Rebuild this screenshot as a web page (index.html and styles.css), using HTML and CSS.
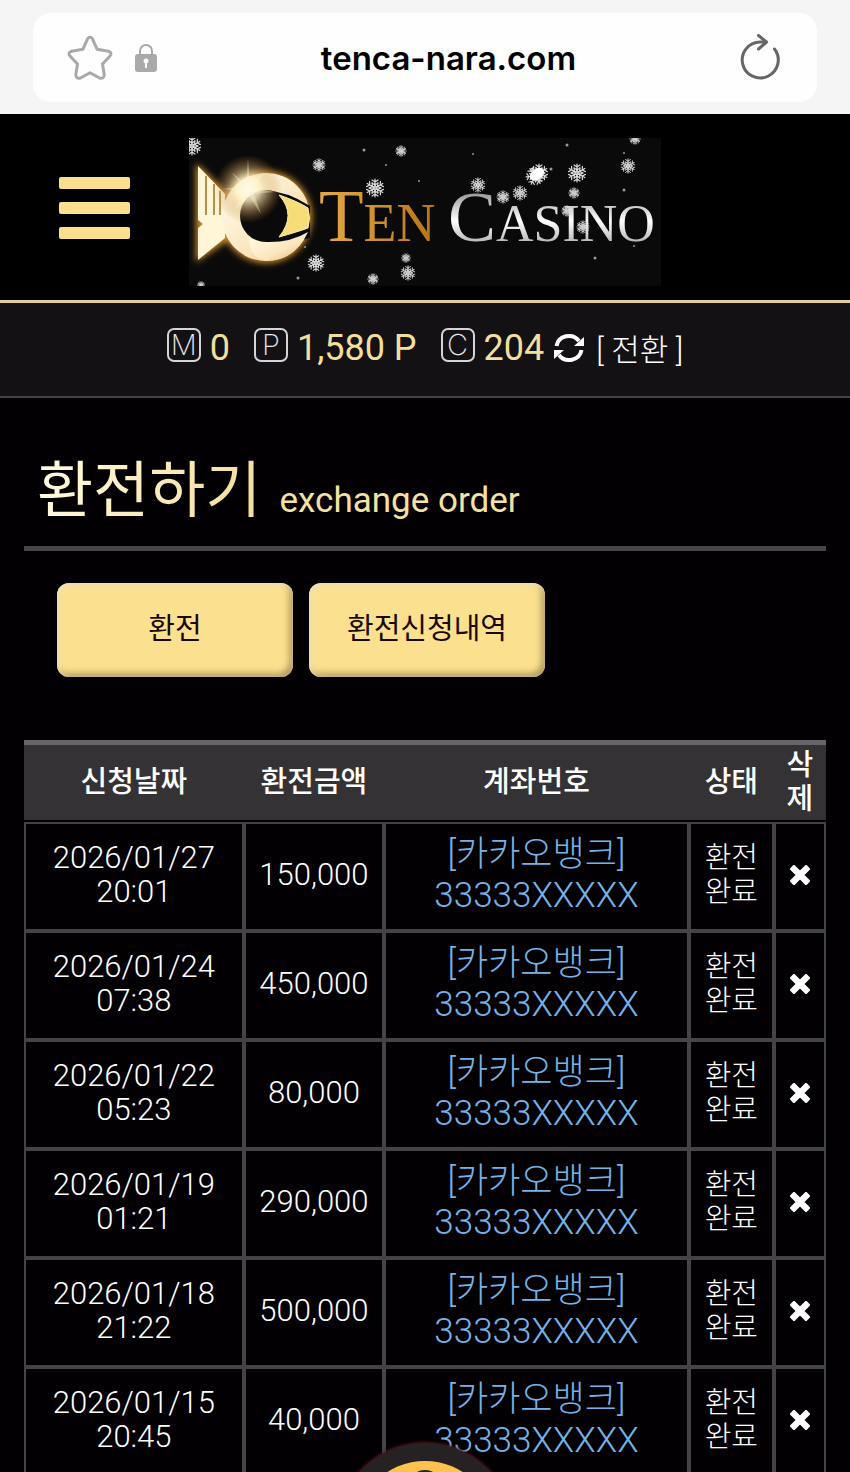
FILE: index.html
```html
<!DOCTYPE html>
<html lang="ko">
<head>
	<meta charset="utf-8">
	<meta name="viewport" content="width=device-width, initial-scale=1">
	<title>환전하기</title>
	<link rel="stylesheet" href="styles.css">
</head>
<body>

	<div class="browser">
		<div class="address">
			<button type="button" class="icon" aria-label="Bookmark">
				<svg width="46" height="46" viewBox="0 0 46 46"><path d="M20.500 3.800Q23 .5 25.500 3.800L30 14.200L41.500 16.200Q45.500 17.500 43 21L35.500 29L37.200 39.500Q37 44.500 32.500 43L23 37.800L13.500 43Q9 44.500 8.800 39.500L10.500 29L3 21Q.5 17.500 4.500 16.200L16 14.200Z" fill="none" stroke="#a9a9a9" stroke-width="3" stroke-linejoin="round"/></svg>
			</button>
			<svg class="lock" width="22" height="30" viewBox="0 0 22 30"><path d="M5 13V8a6 6 0 0 1 12 0v5" fill="none" stroke="#a9a9a9" stroke-width="2"/><rect y="11" width="22" height="18" rx="3" fill="#a9a9a9"/><circle cx="11" cy="18" r="2.500" fill="#fff"/><path d="M10 18h2v7h-2z" fill="#fff"/></svg>
			<input class="url" type="text" value="tenca-nara.com" aria-label="Address">
			<button type="button" class="icon" aria-label="Reload">
				<svg width="40" height="48" viewBox="0 0 40 48" fill="none" stroke="#666" stroke-width="3" stroke-linecap="round" stroke-linejoin="round"><path d="M34.500 15A18 18 0 1 1 20 8h6"/><path d="M18.500 1.500l8 6.500-8 7"/></svg>
			</button>
		</div>
	</div>

	<header class="header">
		<button type="button" class="menu" aria-label="Menu"><i></i><i></i><i></i></button>
		<a href="#" class="logo">
			<svg width="472" height="148" viewBox="0 0 472 148" role="img" aria-label="Ten Casino">
				<defs>
					<linearGradient id="gold" x1="0" y1="0" x2="1" y2="0"><stop offset="0" stop-color="#e5aa48"/><stop offset="1" stop-color="#b87512"/></linearGradient>
					<linearGradient id="silver" x1="0" y1="0" x2="0" y2="1"><stop offset="0.200" stop-color="#999"/><stop offset="0.550" stop-color="#fff"/><stop offset="0.800" stop-color="#bbb"/></linearGradient>
					<linearGradient id="ring" x1="0" y1="0" x2="1" y2="1"><stop offset="0" stop-color="#fffdf0"/><stop offset="0.600" stop-color="#fbe6bd"/><stop offset="1" stop-color="#dfa963"/></linearGradient>
					<radialGradient id="flare"><stop offset="0" stop-color="#fff"/><stop offset="0.350" stop-color="#fff0c4" stop-opacity="0.800"/><stop offset="1" stop-color="#b47420" stop-opacity="0"/></radialGradient>
					<filter id="glow" x="-20%" y="-20%" width="140%" height="140%"><feGaussianBlur stdDeviation="3"/></filter>
					<g id="flake" stroke="#ddd" stroke-width="1.200" stroke-linecap="round">
						<g id="arm"><path d="M0 0V-9M0-6l-3-2M0-6l3-2M0-3l-3-2M0-3l3-2M-2-1l-2-1" fill="none"/></g>
						<use href="#arm" transform="rotate(60)"/><use href="#arm" transform="rotate(120)"/><use href="#arm" transform="rotate(180)"/><use href="#arm" transform="rotate(240)"/><use href="#arm" transform="rotate(300)"/>
						<circle r="2" fill="#bbb"/>
					</g>
				</defs>
				<rect width="472" height="148" fill="#0b0a0b"/>
				<!-- fish -->
				<g filter="url(#glow)" fill="#c98a2c">
					<path d="M7 25L38 54V103L7 124Z"/>
					<circle cx="77" cy="79" r="46"/>
				</g>
				<path d="M9 28L36 56V100L9 122V90L14 86L9 82Z" fill="#fff6d8"/>
				<path d="M17 38V77M25 46V77M31 53V77" stroke="#a16d25" stroke-width="1.500"/>
				<circle cx="77" cy="79" r="44" fill="url(#ring)"/>
				<circle cx="77" cy="78" r="26" fill="#0b0a0b"/>
				<path d="M74 52Q98 53 121 68V100Q101 106 78 104Z" fill="#0b0a0b"/>
				<path d="M90 57Q108 63 119 70Q122 80 119 90Q108 94 90 99Q108 77 90 57Z" fill="#f6dd77" stroke="#fff0a8"/>
				<path d="M76 104Q101 105 119 94Q106 123 77 123Q60 120 60 99Q68 105 76 104Z" fill="url(#ring)"/>
				<circle cx="59" cy="51" r="34" fill="url(#flare)"/>
				<path d="M59 20l2 26 14-12-10 16 20 4-20 2 7 20-12-18-14 14 8-19-20-2 20-3-12-14 15 12z" fill="#fff4d0" opacity="0.400"/>
				<!-- name -->
				<g font-family="'Liberation Serif', serif">
					<text x="130" y="103" font-size="73" fill="url(#gold)">T<tspan font-size="54">EN</tspan></text>
					<text x="259" y="103" font-size="72" fill="url(#silver)">C<tspan font-size="52">ASINO</tspan></text>
				</g>
				<!-- snow -->
				<use href="#flake" x="3" y="8"/>
				<use href="#flake" transform="translate(130 27) scale(.7)"/>
				<use href="#flake" transform="translate(212 13) scale(.6)"/>
				<use href="#flake" x="186" y="50"/>
				<use href="#flake" transform="translate(127 125) scale(.9)"/>
				<use href="#flake" transform="translate(217 120) scale(.5)"/>
				<use href="#flake" transform="translate(219 135) scale(.8)"/>
				<use href="#flake" transform="translate(184 141) scale(.6)"/>
				<use href="#flake" transform="translate(12 147) scale(.4)"/>
				<use href="#flake" transform="translate(289 47) scale(.8)"/>
				<use href="#flake" transform="translate(314 59) scale(.7)"/>
				<use href="#flake" transform="translate(331 55) scale(.8)"/>
				<use href="#flake" x="350" y="35"/>
				<use href="#flake" transform="translate(346 38) rotate(25)"/>
				<ellipse cx="348" cy="36" rx="8" ry="5" fill="#fff" transform="rotate(-35 348 36)"/>
				<use href="#flake" x="388" y="35"/>
				<use href="#flake" transform="translate(385 55) scale(.6)"/>
				<use href="#flake" transform="translate(439 28) scale(.8)"/>
				<use href="#flake" transform="translate(378 73) scale(.6)"/>
				<use href="#flake" transform="translate(394 89) scale(.7)"/>
				<use href="#flake" transform="translate(446 1) scale(.6)"/>
				<g fill="#999"><circle cx="175" cy="12" r="1.500"/><circle cx="197" cy="27" r="1"/><circle cx="230" cy="43" r="1"/><circle cx="284" cy="16" r="1"/><circle cx="378" cy="7" r="1.500"/><circle cx="362" cy="31" r="1.500"/><circle cx="435" cy="15" r="1"/><circle cx="435" cy="52" r="1.500"/><circle cx="406" cy="120" r="1.500"/><circle cx="445" cy="108" r="1"/><circle cx="109" cy="140" r="1.500"/><circle cx="116" cy="109" r="1"/></g>
			</svg>
		</a>
	</header>

	<div class="status">
		<span class="stat"><b>M</b>0</span>
		<span class="stat"><b>P</b>1,580 P</span>
		<span class="stat"><b>C</b>204</span>
		<a href="#" class="convert">
			<svg width="30" height="30" viewBox="0 0 30 30"><path d="M2.500 13A12.500 12 0 0 1 25 8M27.500 17A12.500 12 0 0 1 5 22" fill="none" stroke="#fff" stroke-width="4"/><path d="M30 4V13H20ZM0 26V17H10Z" fill="#fff"/></svg>
			[ 전환 ]
		</a>
	</div>

	<main class="content">
		<h1 class="title"><span>환전하기</span> <small>exchange order</small></h1>

		<div class="tabs">
			<button type="button">환전</button>
			<button type="button">환전신청내역</button>
		</div>

		<table class="orders">
			<thead>
				<tr>
					<th class="date">신청날짜</th>
					<th class="amount">환전금액</th>
					<th class="account">계좌번호</th>
					<th class="state">상태</th>
					<th class="del">삭제</th>
				</tr>
			</thead>
			<tbody id="orders"></tbody>
		</table>
	</main>

	<button type="button" class="float" aria-label="Support">
		<svg width="140" height="140" viewBox="0 0 140 140"><circle cx="70" cy="70" r="70" fill="#ffc34d"/><circle cx="70" cy="26" r="17" fill="#262224"/><path d="M30 104V82a28 28 0 0 1 28-28h24a28 28 0 0 1 28 28v22z" fill="#262224"/></svg>
	</button>

	<script src="orders.js"></script>
</body>
</html>
```

FILE: styles.css
```css
* {
	box-sizing: border-box;
}
html, body {
	height: 100%;
}
body {
	margin: 0;
	overflow: hidden;
	background-color: #020003;
	color: #fff;
	font-family: Roboto, "Noto Sans CJK KR", sans-serif;
	font-weight: 300;
}
button {
	border: 0;
	padding: 0;
	background: none;
	font: inherit;
	color: inherit;
	cursor: pointer;
}
svg {
	display: block;
}
a {
	color: inherit;
	text-decoration: none;
}

/* address bar */
.browser {
	padding: 13px 33px 12px;
	background-color: #f5f5f5;
}
.address {
	display: flex;
	align-items: center;
	height: 89px;
	padding: 0 37px 0 34px;
	border-radius: 18px;
	background-color: #fefefe;
}
.lock {
	margin-left: 22px;
}
.url {
	flex: 1;
	min-width: 0;
	border: 0;
	padding: 0;
	background: none;
	color: #000;
	font: 600 33px Inter, sans-serif;
	text-align: center;
}

/* header */
.header {
	display: grid;
	grid-template-columns: 1fr auto 1fr;
	align-items: center;
	padding: 24px 59px 14px;
	border-bottom: 3px solid #e3cd98;
	background-color: #000;
}
.menu {
	display: grid;
	gap: 13px;
	width: 71px;
	padding-bottom: 8px;
}
.menu i {
	height: 12px;
	border-radius: 2px;
	background-color: #fbdf8f;
}

.status {
	display: flex;
	justify-content: center;
	align-items: center;
	gap: 24px;
	height: 95px;
	padding-bottom: 4px;
	border-bottom: 2px solid #454347;
	background-color: #131114;
	white-space: nowrap;
}
.stat {
	display: flex;
	align-items: center;
	gap: 9px;
	color: #f3df9c;
	font-size: 36px;
	font-weight: 400;
}
.stat b {
	width: 34px;
	height: 34px;
	margin-bottom: 6px;
	border: 2px solid #d5d5d8;
	border-radius: 7px;
	color: #e6e6e8;
	font: 200 29px/30px Inter, sans-serif;
	text-align: center;
}
.convert {
	display: flex;
	align-items: center;
	gap: 12px;
	margin-left: -14px;
	font-size: 31px;
}

/* page */
.content {
	padding: 48px 24px 0;
}
.title {
	display: flex;
	align-items: baseline;
	gap: 18px;
	margin: 0;
	padding: 0 13px;
	border-bottom: 5px solid #484549;
	font-size: 61px;
	font-weight: 400;
	line-height: 90px;
}
.title span {
	background: linear-gradient(100deg, #fffbe2, #f5dc98);
	-webkit-background-clip: text;
	background-clip: text;
	color: transparent;
}
.title small {
	color: #f6e1a4;
	font-size: 35px;
}

.tabs {
	display: flex;
	gap: 16px;
	padding: 32px 33px 63px;
}
.tabs button {
	width: 236px;
	height: 94px;
	padding-bottom: 8px;
	border-radius: 12px;
	background-color: #fae08f;
	box-shadow: inset 2px 2px 6px #f3e5bb, inset -3px -3px 7px #a58b52;
	color: #1a0808;
	font-size: 29px;
	font-weight: 400;
}

.orders {
	width: 100%;
	border-spacing: 0;
	table-layout: fixed;
	font-size: 31px;
	line-height: 34px;
	text-align: center;
}
.orders th {
	height: 82px;
	padding: 0 8px 2px;
	border-top: 5px solid #68656a;
	border-bottom: 2px solid #020003;
	background-color: #353235;
	font-size: 29px;
	font-weight: 500;
}
.orders td {
	height: 109px;
	padding: 0 8px 4px;
	border: 2px solid #454347;
}
.orders .date {
	width: 27.4%;
}
.orders .amount {
	width: 17.5%;
}
.orders .account {
	width: 38%;
}
.orders .state {
	width: 10.6%;
}
.orders .del {
	width: 6.5%;
}
.orders td.account {
	color: #74b3e8;
	font-size: 35px;
	line-height: 41px;
}
.orders td.state {
	font-size: 29px;
}
.orders .del svg {
	margin: 0 auto;
}

/* support button */
.float {
	position: fixed;
	bottom: -147px;
	left: 50%;
	display: grid;
	place-items: center;
	width: 176px;
	height: 176px;
	border-radius: 50%;
	background-color: #262224;
	box-shadow: 0 0 3px 1px #5a1218;
	transform: translateX(-50%);
}
```

FILE: orders.js
```js
var orders = [
	["2026/01/27", "20:01", "150,000"],
	["2026/01/24", "07:38", "450,000"],
	["2026/01/22", "05:23", "80,000"],
	["2026/01/19", "01:21", "290,000"],
	["2026/01/18", "21:22", "500,000"],
	["2026/01/15", "20:45", "40,000"]
];
var cross = '<svg width="20" height="20" viewBox="0 0 20 20"><path d="M4 4L16 16M16 4L4 16" stroke="#fff" stroke-width="6.500" stroke-linecap="square"/></svg>';

var html = "";
for (var i = 0; i < orders.length; i++) {
	html += '<tr><td class="date">' + orders[i][0] + "<br>" + orders[i][1] + "</td>" +
		'<td class="amount">' + orders[i][2] + "</td>" +
		'<td class="account"><a href="#">[카카오뱅크]<br>33333XXXXX</a></td>' +
		'<td class="state">환전<br>완료</td>' +
		'<td class="del"><button type="button" aria-label="삭제">' + cross + "</button></td></tr>";
}
document.getElementById("orders").innerHTML = html;
```
